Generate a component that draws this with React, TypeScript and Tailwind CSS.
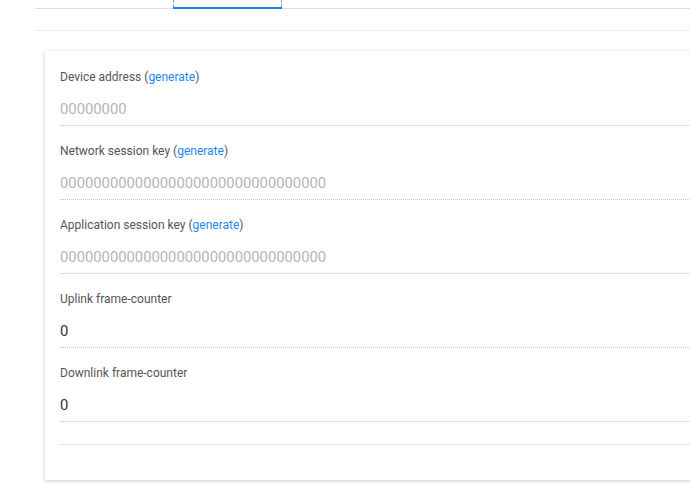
import React from 'react';

interface Field {
  label: string;
  generate?: boolean;
  value: string;
  placeholder?: boolean;
}

const fields: Field[] = [
  { label: 'Device address', generate: true, value: '00000000', placeholder: true },
  { label: 'Network session key', generate: true, value: '00000000000000000000000000000000', placeholder: true },
  { label: 'Application session key', generate: true, value: '00000000000000000000000000000000', placeholder: true },
  { label: 'Uplink frame-counter', value: '0' },
  { label: 'Downlink frame-counter', value: '0' },
];

const FormField: React.FC<{ field: Field }> = ({ field }) => (
  <div className="mb-[17px]">
    <div className="text-[12px] leading-[16px] text-[#555]">
      {field.label}
      {field.generate && (
        <>
          {' ('}
          <a className="text-[#1e88e5] cursor-pointer">generate</a>
          {')'}
        </>
      )}
    </div>
    <div className="h-[41px] pt-[14px] border-b border-dotted border-[#c4c4c4]">
      <div
        className={
          field.placeholder
            ? 'text-[14.8px] leading-[20px] text-[#b5b5b5]'
            : 'text-[14.8px] leading-[20px] text-[#333]'
        }
      >
        {field.value}
      </div>
    </div>
  </div>
);

export default function App() {
  return (
    <div className="w-[690px] h-[485px] overflow-hidden bg-white font-['Roboto',sans-serif]">
      <div className="pl-[35px]">
        <div className="h-[9px] border-b border-[#dcdcdc] flex">
          <div className="ml-[138px] w-[109px] -mb-px flex flex-col">
            <div className="h-[7px] border-x border-dashed border-[#5aa7ee]" />
            <div className="h-[2px] bg-[#1a7fe0]" />
          </div>
        </div>
        <div className="h-[22px] border-b border-[#ececec]" />
        <div className="mt-[20px] ml-[10px] w-[700px] h-[429px] bg-white shadow-[0_1px_4px_rgba(0,0,0,0.22)] px-[15px] pt-[18px]">
          {fields.map((f) => (
            <FormField key={f.label} field={f} />
          ))}
          <div className="mt-[22px] border-b border-[#e3e3e3]" />
        </div>
      </div>
    </div>
  );
}
